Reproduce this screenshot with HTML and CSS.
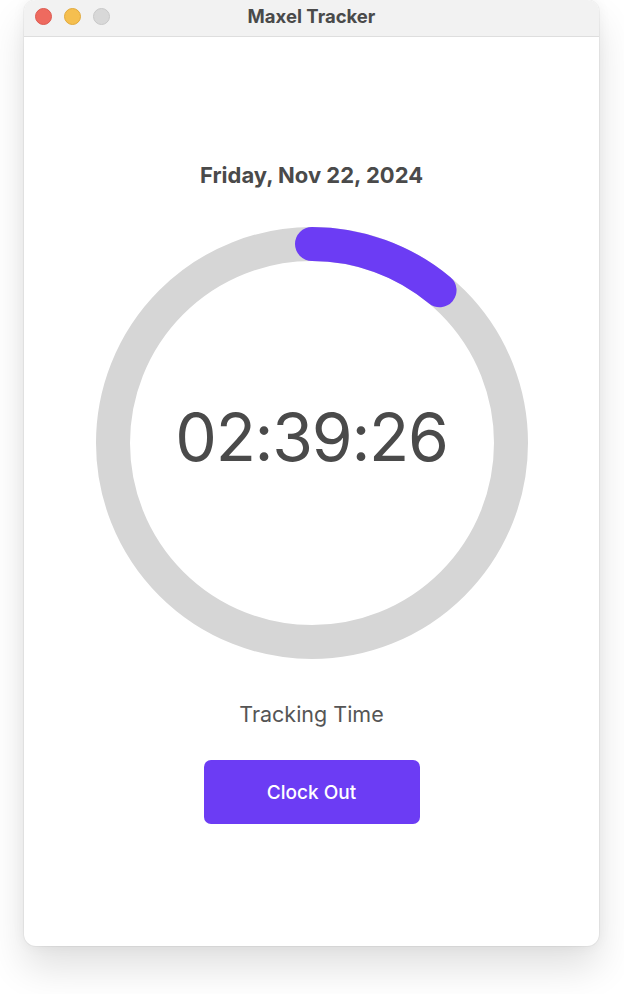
FILE: index.html
```
<!DOCTYPE html>
<html lang="en">
<head>
    <meta charset="UTF-8">
    <meta name="viewport" content="width=device-width, initial-scale=1.0">
    <title>Maxel Tracker</title>
    <link rel="stylesheet" href="styles.css">
</head>
<body>
    <div class="window">
        <div class="titlebar">
            <div class="lights">
                <span class="light red"></span>
                <span class="light yellow"></span>
                <span class="light gray"></span>
            </div>
            <div class="title">Maxel Tracker</div>
        </div>

        <div class="content">
            <div class="date">Friday, Nov 22, 2024</div>

            <div class="dial">
                <svg class="ring" width="432" height="432" viewBox="0 0 432 432">
                    <circle cx="216" cy="216" r="199" fill="none" stroke="#d6d6d6" stroke-width="34"/>
                    <!-- 2:39:26 of 24h, 11.07% of the circle -->
                    <circle cx="216" cy="216" r="199" fill="none" stroke="#6c3cf4" stroke-width="34"
                        stroke-linecap="round" stroke-dasharray="138.4 1250.4"
                        transform="rotate(-90 216 216)"/>
                </svg>
                <div class="time">02:39:26</div>
            </div>

            <div class="status">Tracking Time</div>
            <button class="clock-btn">Clock Out</button>
        </div>
    </div>
</body>
</html>
```
FILE: styles.css
```
body {
    margin: 0;
    height: 994px;
    background: #ffffff;
    font-family: Inter, "Open Sans", sans-serif;
    color: #4a4a4a;
}

.window {
    margin-left: 24px;
    width: 575px;
    height: 946px;
    background: #ffffff;
    border-radius: 12px;
    box-shadow: 0 22px 38px rgba(0, 0, 0, 0.12), 0 0 14px rgba(0, 0, 0, 0.05), 0 0 0 1px rgba(0, 0, 0, 0.04);
    overflow: hidden;
}

.titlebar {
    height: 36px;
    background: #f2f2f2;
    border-bottom: 1px solid #dedede;
    display: flex;
    align-items: center;
    justify-content: center;
    position: relative;
}

.lights {
    position: absolute;
    left: 11px;
    top: 8px;
    display: flex;
    gap: 12px;
}

.light {
    width: 17px;
    height: 17px;
    border-radius: 50%;
    box-sizing: border-box;
}

.light.red {
    background: #ee6a5f;
    border: 1px solid #dc5a50;
}

.light.yellow {
    background: #f5bf4f;
    border: 1px solid #e0a93d;
}

.light.gray {
    background: #d8d8d8;
    border: 1px solid #c8c8c8;
}

.title {
    font-size: 18.5px;
    font-weight: 700;
    color: #4a4a4a;
    margin-top: -5px;
}

.content {
    display: flex;
    flex-direction: column;
    align-items: center;
    padding-top: 125px;
}

.date {
    font-size: 22px;
    line-height: 27px;
    font-weight: 700;
    color: #4a4a4a;
}

.dial {
    margin-top: 38px;
    display: grid;
    place-items: center;
}

.ring,
.time {
    grid-area: 1 / 1;
}

.ring {
    display: block;
}

.time {
    font-size: 66px;
    font-weight: 400;
    color: #4a4a4a;
    margin-top: -12px;
    letter-spacing: -1.3px;
}

.status {
    margin-top: 43px;
    font-size: 21.5px;
    line-height: 24px;
    color: #555555;
}

.clock-btn {
    margin-top: 34px;
    width: 216px;
    height: 64px;
    border: none;
    border-radius: 7px;
    background: #6c3cf4;
    color: #ffffff;
    font-family: Inter, "Open Sans", sans-serif;
    font-size: 19px;
    font-weight: 500;
    cursor: pointer;
}
```
